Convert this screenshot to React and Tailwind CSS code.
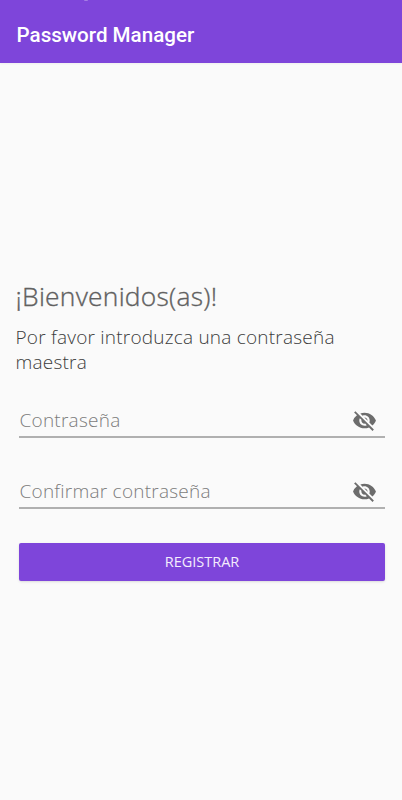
import { MdVisibilityOff } from "react-icons/md"

function PasswordField({ placeholder }) {
    return (
        <div className="flex h-[36px] items-center justify-between border-b-2 border-[#b0b0b0] pt-[3px] pr-2">
            <input type="text" placeholder={placeholder} className="h-[27px] w-[300px] bg-transparent pl-[0.5px] text-[19px] font-light tracking-[0.24px] text-[#555] outline-none placeholder:text-[#7c7c7c]" />
            <button type="button" aria-label="Mostrar contraseña">
                <MdVisibilityOff className="size-[25px] text-[#6c6c6c]" />
            </button>
        </div>
    )
}

function App() {
    return (
        <div className="flex h-[800px] w-full flex-col overflow-hidden bg-[#fafafa] font-['Open_Sans',sans-serif]">
            <header className="relative h-[63px] bg-[#7e45da] px-[16.5px] pt-[21px] shadow-xs">
                {/* resto de la barra de estado */}
                <span className="absolute top-0 left-[84px] h-px w-[4px] rounded-b-full bg-[#a57ce4]" />
                <h1 className="font-['Roboto',sans-serif] text-[20.6px] leading-7 font-medium text-white">Password Manager</h1>
            </header>
            <main className="pt-[215px]">
                <div className="px-[15.5px]">
                    <h2 className="text-[26.4px] leading-9 font-light tracking-[0.25px] text-[#606060] [-webkit-text-stroke:0.35px_#606060]">¡Bienvenidos(as)!</h2>
                    <p className="mt-[11px] text-[19px] leading-[25px] font-light tracking-[0.22px] text-[#3c3c3c]">Por favor introduzca una contraseña maestra</p>
                </div>
                <form className="mt-[27px] flex flex-col pr-[17px] pl-[19px]">
                    <PasswordField placeholder="Contraseña" />
                    <div className="mt-[35px]">
                        <PasswordField placeholder="Confirmar contraseña" />
                    </div>
                    <button type="button" className="mt-[34px] h-[37.5px] rounded-xs bg-[#7e45da] text-[14.5px] text-[#f4ecfd] shadow-sm">REGISTRAR</button>
                </form>
            </main>
        </div>
    )
}

export default App
